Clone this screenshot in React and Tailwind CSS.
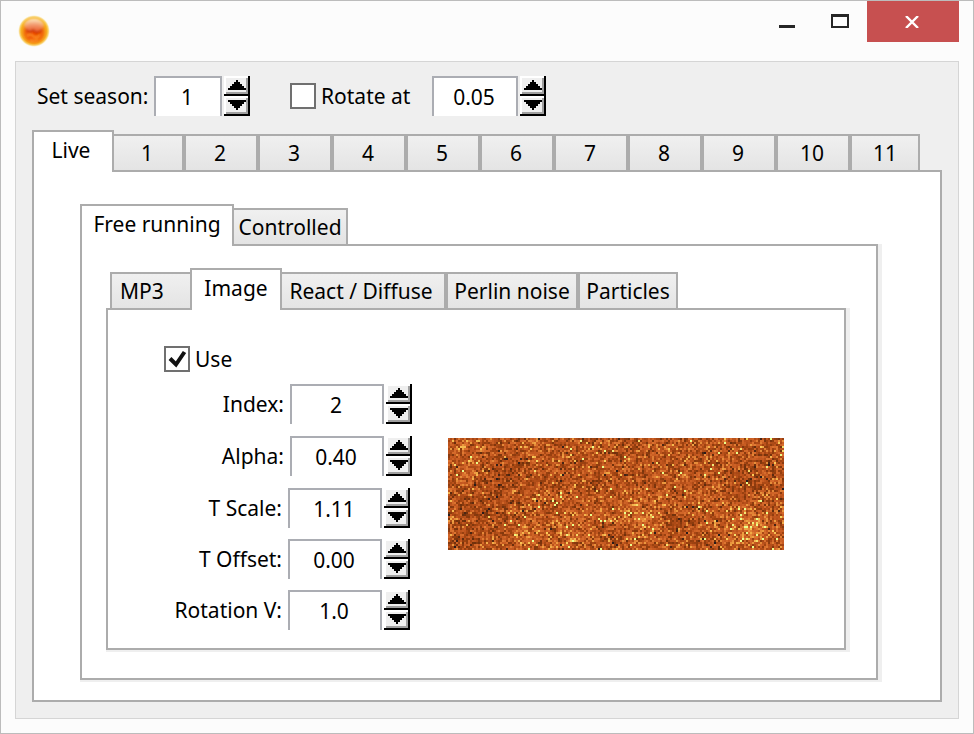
import { useEffect, useRef } from 'react';

const PREVIEW_COLS = 168;
const PREVIEW_ROWS = 56;

function seededRandom(seed) {
  let s = seed;
  return () => {
    s = (s + 0x6d2b79f5) | 0;
    let t = Math.imul(s ^ (s >>> 15), 1 | s);
    t = (t + Math.imul(t ^ (t >>> 7), 61 | t)) ^ t;
    return ((t ^ (t >>> 14)) >>> 0) / 4294967296;
  };
}

// Brightness of the sun's surface: dark grain at 0, yellow flecks near 1.
const PALETTE = [
  [0, [40, 28, 28]],
  [0.12, [110, 48, 12]],
  [0.35, [158, 66, 16]],
  [0.55, [196, 88, 32]],
  [0.72, [218, 112, 46]],
  [0.85, [236, 156, 64]],
  [0.95, [250, 206, 90]],
  [1, [232, 255, 140]],
];

function colourAt(v) {
  const x = Math.min(1, Math.max(0, v));
  for (let i = 1; i < PALETTE.length; i++) {
    const [b, cb] = PALETTE[i];
    const [a, ca] = PALETTE[i - 1];
    if (x <= b) {
      const k = (x - a) / (b - a);
      return ca.map((c, j) => c + (cb[j] - c) * k);
    }
  }
  return PALETTE[PALETTE.length - 1][1];
}

// Soft bright and dark areas: column, row, radius, strength.
const AREAS = [
  [150, 44, 10, 0.24],
  [42, 4, 7, 0.1],
  [98, 37, 10, 0.14],
  [14, 12, 10, 0.08],
  [60, 48, 14, 0.08],
  [40, 46, 7, 0.1],
  [26, 18, 12, -0.1],
  [112, 44, 8, -0.1],
  [148, 24, 10, -0.1],
  [14, 40, 14, -0.08],
];

function SurfacePreview() {
  const ref = useRef(null);
  useEffect(() => {
    const ctx = ref.current.getContext('2d');
    const image = ctx.createImageData(PREVIEW_COLS, PREVIEW_ROWS);
    const rand = seededRandom(11);
    for (let y = 0; y < PREVIEW_ROWS; y++) {
      for (let x = 0; x < PREVIEW_COLS; x++) {
        const noise = (rand() + rand() + rand() + rand()) / 4 - 0.5;
        let v = 0.5 + noise * 1.3;
        for (const [ax, ay, r, k] of AREAS) {
          const d = ((x - ax) ** 2 + (y - ay) ** 2) / (r * r);
          v += k * Math.exp(-d);
        }
        if (rand() > 0.975) v += 0.28;
        const [red, green, blue] = colourAt(v);
        const i = (y * PREVIEW_COLS + x) * 4;
        image.data[i] = red;
        image.data[i + 1] = green;
        image.data[i + 2] = blue;
        image.data[i + 3] = 255;
      }
    }
    ctx.putImageData(image, 0, 0);
  }, []);
  return (
    <canvas
      ref={ref}
      width={PREVIEW_COLS}
      height={PREVIEW_ROWS}
      role="img"
      aria-label="Surface preview"
      className="h-28 w-[336px] bg-[#b85a20] [image-rendering:pixelated]"
    />
  );
}

function SpinButton({ label, down }) {
  return (
    <button
      type="button"
      aria-label={label}
      className="flex h-5 w-[26px] items-start justify-center bg-[#efefef] pt-1 shadow-[inset_-2px_-2px_0_#000,inset_2px_2px_0_#fff,inset_-4px_-4px_0_#a0a0a0]"
    >
      <svg width="18" height="10" viewBox="0 0 18 10" fill="#000" shapeRendering="crispEdges" aria-hidden="true">
        {down ? (
          <path d="M0 0h18v2h-2v2h-2v2h-2v2h-2v2H8V8H6V6H4V4H2V2H0z" />
        ) : (
          <path d="M0 10h18V8h-2V6h-2V4h-2V2h-2V0H8v2H6v2H4v2H2v2H0z" />
        )}
      </svg>
    </button>
  );
}

function Spinner({ id, name, value, width }) {
  return (
    <div className="flex gap-0.5">
      <input
        id={id}
        type="text"
        defaultValue={value}
        className={`h-10 border-2 border-b-0 border-[#abadb3] bg-white pr-0.5 text-center outline-none ${width}`}
      />
      <div className="flex flex-col">
        <SpinButton label={`Increase ${name}`} />
        <SpinButton label={`Decrease ${name}`} down />
      </div>
    </div>
  );
}

function CheckBox({ label, checked, gap }) {
  return (
    <label className={`flex h-[26px] items-center ${gap}`}>
      <span className="grid size-[26px]">
        <input
          type="checkbox"
          defaultChecked={checked}
          className="peer col-start-1 row-start-1 size-[26px] appearance-none border-2 border-[#707070] bg-white"
        />
        <svg
          viewBox="0 0 26 26"
          className="pointer-events-none col-start-1 row-start-1 hidden size-[26px] peer-checked:block"
          fill="none"
          stroke="#111"
          strokeWidth="4"
          aria-hidden="true"
        >
          <path d="M6 12.5l6 6L20.5 6" />
        </svg>
      </span>
      {label}
    </label>
  );
}

function Tab({ label, active, className }) {
  return (
    <button
      type="button"
      role="tab"
      aria-selected={!!active}
      className={`border-[#acacac] whitespace-nowrap ${
        active
          ? 'h-[42px] border-2 border-b-0 bg-white pb-1'
          : 'h-[38px] border-y-2 bg-linear-to-b from-[#f0f0f0] to-[#e4e4e4]'
      } ${className}`}
    >
      {label}
    </button>
  );
}

function Tabs({ label, indent = '', children }) {
  return (
    <div role="tablist" aria-label={label} className={`relative z-10 -mb-0.5 flex items-end ${indent}`}>
      {children}
    </div>
  );
}

const PANEL_SHADOW = 'shadow-[4px_0_0_#efefef,0_2px_0_#efefef,4px_2px_0_#efefef]';

function Field({ label, name, value }) {
  return (
    <div className="flex items-center gap-1.5">
      <label htmlFor={name}>{label}</label>
      <Spinner id={name} name={label.replace(':', '')} value={value} width="w-[94px]" />
    </div>
  );
}

function SunIcon() {
  return (
    <svg width="32" height="32" viewBox="0 0 32 32" aria-hidden="true">
      <defs>
        <radialGradient id="glow">
          <stop offset="0.78" stopColor="#f8b820" />
          <stop offset="0.9" stopColor="#f8cf60" stopOpacity="0.8" />
          <stop offset="1" stopColor="#fde9b0" stopOpacity="0" />
        </radialGradient>
        <radialGradient id="core" cx="0.5" cy="0.55" r="0.5">
          <stop offset="0" stopColor="#f04800" />
          <stop offset="0.65" stopColor="#f06008" />
          <stop offset="1" stopColor="#f8b420" />
        </radialGradient>
        <linearGradient id="shine" x1="0" y1="0" x2="0" y2="1">
          <stop offset="0" stopColor="#fff0d8" stopOpacity="0.9" />
          <stop offset="1" stopColor="#e88070" stopOpacity="0.4" />
        </linearGradient>
        <filter id="soft">
          <feGaussianBlur stdDeviation="0.9" />
        </filter>
      </defs>
      <circle cx="16" cy="16" r="16" fill="url(#glow)" />
      <g filter="url(#soft)">
        <circle cx="16" cy="16" r="13" fill="url(#core)" />
        <ellipse cx="16" cy="10" rx="9.5" ry="6.5" fill="url(#shine)" />
        <path d="M8 15l4 2 3-2 4 3 5-3" fill="none" stroke="#c83808" strokeWidth="2.5" opacity="0.7" />
        <path d="M9 21q3-3 6 0t7-1M12 25q4 2 8-1" fill="none" stroke="#ff9828" strokeWidth="2" opacity="0.8" />
      </g>
    </svg>
  );
}

const SEASONS = ['2', '3', '4', '5', '6', '7', '8', '9', '10'];

export default function App() {
  return (
    <div className="flex min-h-screen flex-col border border-[#bcbcbc] bg-[#fcfcfc] px-3.5 pb-3.5 font-['Noto_Sans',sans-serif] text-[21px] leading-7 text-black">
      <header className="flex h-[60px] items-start justify-between">
        <div className="pt-3.5 pl-[3px]">
          <SunIcon />
        </div>
        <div className="flex">
          <button type="button" aria-label="Minimize" className="flex h-[41px] w-[52px] justify-center pt-6">
            <svg width="16" height="3" aria-hidden="true">
              <rect width="16" height="3" fill="#262626" />
            </svg>
          </button>
          <button type="button" aria-label="Maximize" className="flex h-[41px] w-[54px] justify-center pt-[13px]">
            <svg width="18" height="14" viewBox="0 0 18 14" shapeRendering="crispEdges" aria-hidden="true">
              <path fill="#262626" fillRule="evenodd" d="M0 0h18v14H0zM2 3v9h14V3z" />
            </svg>
          </button>
          <button type="button" aria-label="Close" className="flex h-[41px] w-[92px] items-center justify-center bg-[#c75050] pr-0.5">
            <svg width="14" height="12" viewBox="0 0 14 12" aria-hidden="true">
              <path d="M1 0L13 12M13 0L1 12" stroke="#fff" strokeWidth="2.4" />
            </svg>
          </button>
        </div>
      </header>

      <main className="flex grow flex-col border border-[#d5d5d5] bg-[#efefef] px-4 pt-3.5 pb-4">
        <div className="flex h-10 items-center pl-[5px]">
          <label htmlFor="season" className="w-[117px]">
            Set season:
          </label>
          <Spinner id="season" name="season" value="1" width="w-[68px]" />
          <div className="w-[142px] pl-10">
            <CheckBox label="Rotate at" gap="gap-[5px] whitespace-nowrap" />
          </div>
          <div className="pl-10">
            <Spinner id="rotation-speed" name="rotation speed" value="0.05" width="w-[86px]" />
          </div>
        </div>

        <div className="flex grow flex-col pt-3.5">
          <Tabs label="Season">
            <Tab label="Live" active className="w-[82px] pr-1" />
            <Tab label="1" className="w-[70px] border-r-2 pr-0.5" />
            {SEASONS.map((s) => (
              <Tab key={s} label={s} className="w-[74px] border-x-2 pr-0.5" />
            ))}
            <Tab label="11" className="w-[70px] border-x-2" />
          </Tabs>
          <section className="flex grow flex-col border-2 border-[#acacac] bg-white pt-8 pr-[62px] pb-5 pl-[46px]">
            <Tabs label="Mode">
              <Tab label="Free running" active className="w-[154px]" />
              <Tab label="Controlled" className="w-[114px] border-r-2" />
            </Tabs>
            <section className={`flex grow flex-col border-2 border-[#acacac] bg-white pt-[22px] pr-[30px] pb-7 pl-6 ${PANEL_SHADOW}`}>
              <Tabs label="Source" indent="pl-1">
                <Tab label="MP3" className="w-20 border-l-2 pl-2 text-left" />
                <Tab label="Image" active className="w-[92px]" />
                <Tab label="React / Diffuse" className="w-[164px] border-r-2 pr-1" />
                <Tab label="Perlin noise" className="w-[132px] border-x-2" />
                <Tab label="Particles" className="w-[100px] border-x-2" />
              </Tabs>
              <section className={`flex grow items-start border-2 border-[#acacac] bg-white pt-9 ${PANEL_SHADOW}`}>
                <div className="flex items-center gap-9">
                  <div className="flex w-[304px] flex-col gap-3 pb-3">
                    <div className="pl-14">
                      <CheckBox label="Use" checked gap="gap-[5px]" />
                    </div>
                    <div className="flex flex-col items-end gap-3">
                      <Field label="Index:" name="index" value="2" />
                      <Field label="Alpha:" name="alpha" value="0.40" />
                    </div>
                    <div className="flex flex-col items-end gap-[11px] pr-0.5">
                      <Field label="T Scale:" name="t-scale" value="1.11" />
                      <Field label="T Offset:" name="t-offset" value="0.00" />
                      <Field label="Rotation V:" name="rotation-v" value="1.0" />
                    </div>
                  </div>
                  <SurfacePreview />
                </div>
              </section>
            </section>
          </section>
        </div>
      </main>
    </div>
  );
}
